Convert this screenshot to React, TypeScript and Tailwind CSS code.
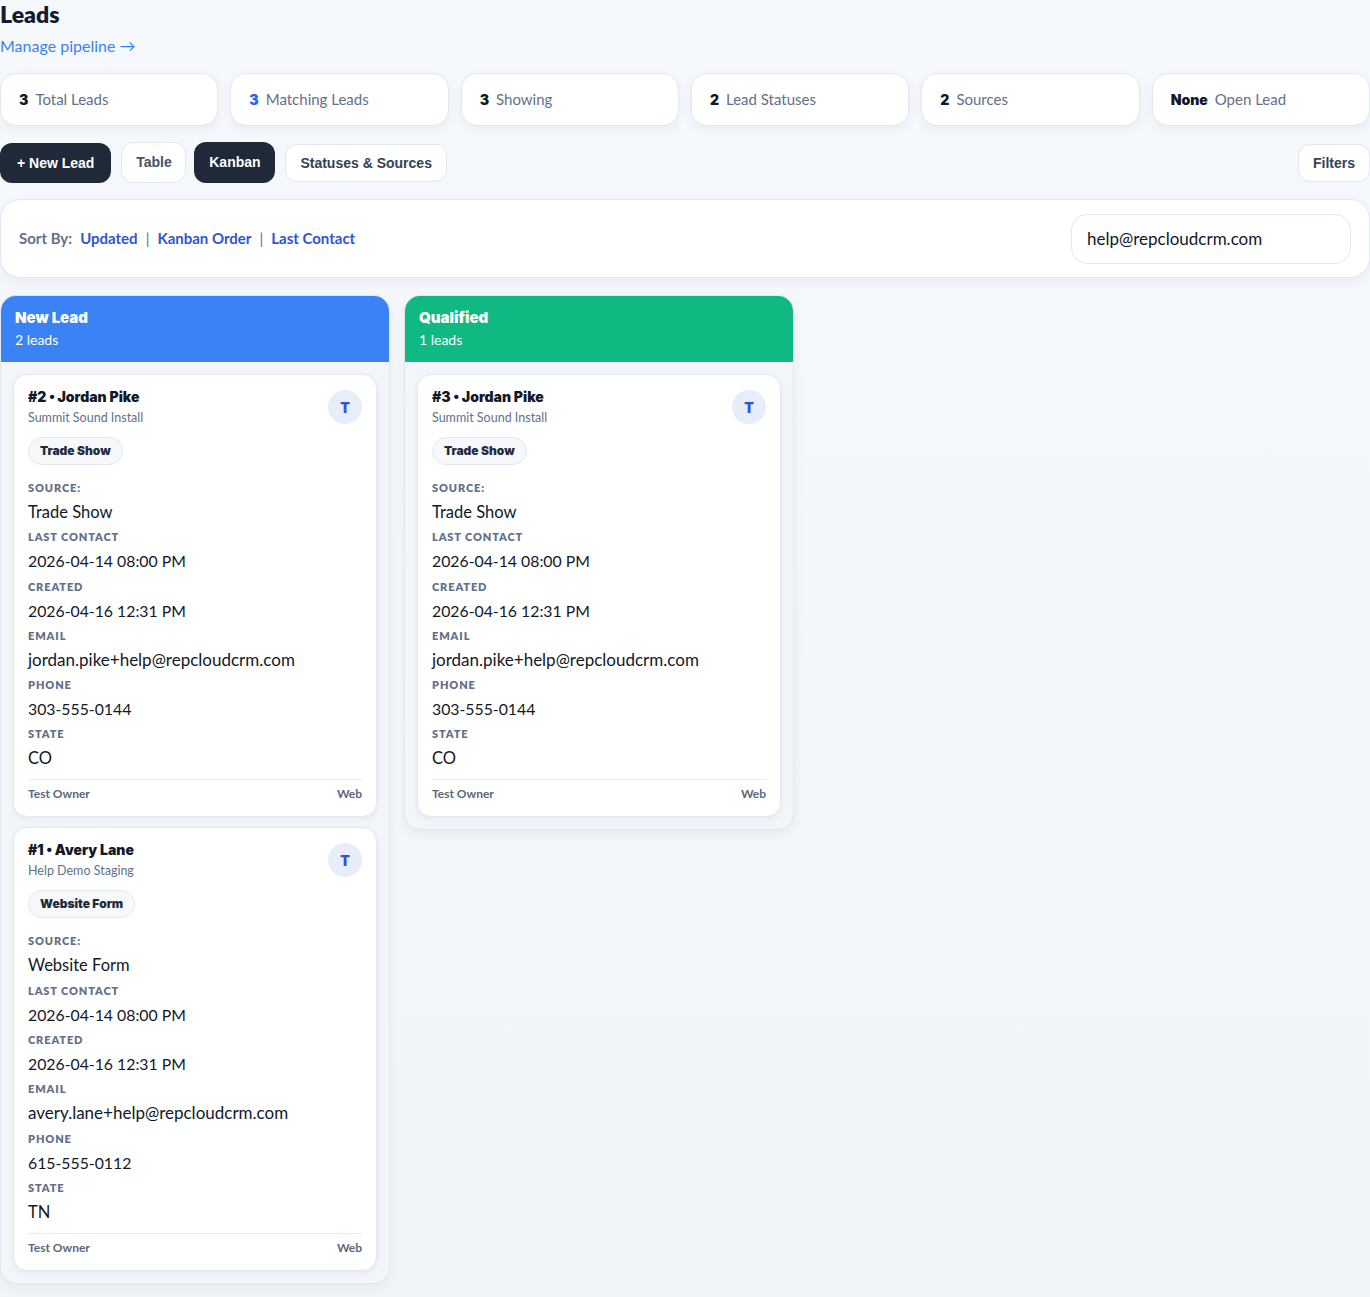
const sans = "font-['Lato','Open_Sans',sans-serif]";
const heavy = "font-['Inter',sans-serif] font-black";

const stats = [
  { n: '3', label: 'Total Leads' },
  { n: '3', label: 'Matching Leads', blue: true },
  { n: '3', label: 'Showing' },
  { n: '2', label: 'Lead Statuses' },
  { n: '2', label: 'Sources' },
  { n: 'None', label: 'Open Lead' },
];

type Lead = { id: number; name: string; company: string; source: string; email: string; phone: string; state: string };

const jordan = { name: 'Jordan Pike', company: 'Summit Sound Install', source: 'Trade Show', email: 'jordan.pike+help@repcloudcrm.com', phone: '303-555-0144', state: 'CO' };
const avery = { name: 'Avery Lane', company: 'Help Demo Staging', source: 'Website Form', email: 'avery.lane+help@repcloudcrm.com', phone: '615-555-0112', state: 'TN' };

function Field({ label, value, size }: { label: string; value: string; size: string }) {
  return (
    <div className="mb-[1.3px]">
      <div className="text-[11px] leading-[24px] font-extrabold uppercase tracking-[0.08em] text-[#64708a]">{label}</div>
      <div className={`${size} leading-[24px] text-[#111827]`}>{value}</div>
    </div>
  );
}

function LeadCard({ lead }: { lead: Lead }) {
  return (
    <div className="rounded-[14px] border border-[#e2e8f0] bg-white px-[14px] pt-[13px] pb-[14px] shadow-[0_2px_6px_rgba(15,23,42,0.06)]">
      <div className="flex items-start justify-between">
        <div>
          <div className={`${heavy} text-[14px] leading-[18px] text-[#111827]`}>#{lead.id} • {lead.name}</div>
          <div className="mt-[3px] text-[12.5px] leading-[17px] text-[#64708a]">{lead.company}</div>
        </div>
        <div className={`${heavy} mt-[2px] flex h-[34px] w-[34px] items-center justify-center rounded-full bg-[#e8edfb] text-[14px] text-[#2f54d6]`}>T</div>
      </div>
      <span className={`${heavy} mt-[11px] block w-fit rounded-full border border-[#e2e8f0] bg-[#f6f8fc] px-[11px] py-[5px] text-[12px] leading-[16px] text-[#1f2a3d]`}>{lead.source}</span>
      <div className="mt-[11px]">
        <Field label="Source:" value={lead.source} size="text-[16.5px]" />
        <Field label="Last Contact" value="2026-04-14 08:00 PM" size="text-[15.8px]" />
        <Field label="Created" value="2026-04-16 12:31 PM" size="text-[15.8px]" />
        <Field label="Email" value={lead.email} size="text-[17px]" />
        <Field label="Phone" value={lead.phone} size="text-[15.8px]" />
        <Field label="State" value={lead.state} size="text-[16.5px]" />
      </div>
      <div className="mt-[9px] flex justify-between border-t border-[#e8ecf2] pt-[6px] text-[12px] leading-[16px] font-bold text-[#5b667c]">
        <span>Test Owner</span>
        <span>Web</span>
      </div>
    </div>
  );
}

function Column({ title, count, color, leads }: { title: string; count: number; color: string; leads: Lead[] }) {
  return (
    <div className="w-[390px] overflow-hidden rounded-[16px] border border-[#e2e8f0] bg-[#f2f5fa] shadow-[0_4px_12px_rgba(15,23,42,0.05)]">
      <div className={`h-[66px] px-[14px] pt-[12px] text-white ${color}`}>
        <div className={`${heavy} text-[15px] leading-[20px]`}>{title}</div>
        <div className="mt-[3px] text-[14px] leading-[18px]">{count} leads</div>
      </div>
      <div className="flex flex-col gap-[10px] px-[12px] pt-[12px] pb-[12px]">
        {leads.map((l) => (
          <LeadCard key={l.id} lead={l} />
        ))}
      </div>
    </div>
  );
}

export default function App() {
  return (
    <div className={`${sans} h-[1297px] overflow-hidden bg-gradient-to-b from-[#f5f8fc] to-[#f1f4f9]`}>
      <h1 className="pt-px text-[23px] leading-[26px] font-extrabold text-[#111c30]">Leads</h1>
      <a className="mt-[7px] block text-[16px] leading-[24px] text-[#3b82f6]">Manage pipeline →</a>

      {/* stat pills */}
      <div className="mt-[15px] grid grid-cols-6 gap-[12px]">
        {stats.map((s) => (
          <div key={s.label} className="flex h-[53px] items-center gap-[7px] rounded-[16px] border border-[#e2e8f0] bg-white px-[18px] text-[15px] shadow-[0_4px_12px_rgba(15,23,42,0.05)]">
            <b className={`${heavy} text-[14px] ${s.blue ? 'text-[#2563eb]' : 'text-[#111827]'}`}>{s.n}</b>
            <span className="text-[#64708a]">{s.label}</span>
          </div>
        ))}
      </div>

      {/* actions */}
      <div className="mt-[16px] flex h-[41px] items-end font-['Liberation_Sans',sans-serif] text-[14px] font-bold">
        <button className="h-[40px] rounded-[12px] bg-[#1f2937] px-[17px] text-white">+ New Lead</button>
        <button className="ml-[10px] h-[41px] w-[65px] rounded-[12px] border border-[#e2e8f0] bg-white text-[#475266]">Table</button>
        <button className="ml-[8px] h-[41px] w-[81px] rounded-[12px] bg-[#1f2937] text-white">Kanban</button>
        <button className="ml-[10px] mb-px h-[38px] rounded-[12px] border border-[#e2e8f0] bg-white px-[14px] text-[#334155]">Statuses &amp; Sources</button>
        <button className="ml-auto mb-px h-[38px] rounded-[12px] border border-[#e2e8f0] bg-white px-[14px] text-[#334155]">Filters</button>
      </div>

      {/* sort bar */}
      <div className="mt-[16px] flex h-[79px] items-center justify-between rounded-[20px] border border-[#e2e8f0] bg-white pr-[18px] pl-[18px] shadow-[0_4px_12px_rgba(15,23,42,0.05)]">
        <div className="flex items-center text-[15px] font-bold">
          <span className="mr-[8px] text-[#64708a]">Sort By:</span>
          <a className="text-[#2f54d6]">Updated</a>
          <span className="mx-[8px] font-normal text-[#64708a]">|</span>
          <a className="text-[#2f54d6]">Kanban Order</a>
          <span className="mx-[8px] font-normal text-[#64708a]">|</span>
          <a className="text-[#2f54d6]">Last Contact</a>
        </div>
        <div className="flex h-[50px] w-[280px] items-center rounded-[16px] border border-[#e2e8f0] bg-white px-[15px] text-[17px] text-[#111827]">help@repcloudcrm.com</div>
      </div>

      {/* board */}
      <div className="mt-[17px] flex items-start gap-[14px]">
        <Column title="New Lead" count={2} color="bg-[#3b82f6]" leads={[{ id: 2, ...jordan }, { id: 1, ...avery }]} />
        <Column title="Qualified" count={1} color="bg-[#10b981]" leads={[{ id: 3, ...jordan }]} />
      </div>
    </div>
  );
}
